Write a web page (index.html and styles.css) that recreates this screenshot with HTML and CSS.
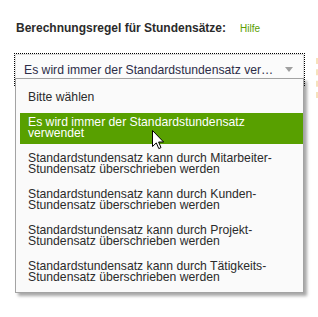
FILE: index.html
```html
<!DOCTYPE html>
<html lang="de">
<head>
  <meta charset="UTF-8">
  <meta name="viewport" content="width=device-width, initial-scale=1.0">
  <title>Stundensätze</title>
  <link rel="stylesheet" href="styles.css">
</head>
<body>
  <div class="field">
    <div class="label-row">
      <span class="label">Berechnungsregel für Stundensätze:</span>
      <a class="help" href="#">Hilfe</a>
    </div>
    <div class="field-row">
      <div class="select-wrap">
        <div class="select">
          <span class="select-text">Es wird immer der Standardstundensatz ver…</span>
          <span class="select-arrow"></span>
        </div>
        <!-- Open dropdown -->
        <div class="dropdown">
          <ul>
            <li>Bitte wählen</li>
            <li class="active">Es wird immer der Standardstundensatz verwendet</li>
            <li>Standardstundensatz kann durch Mitarbeiter-Stundensatz überschrieben werden</li>
            <li>Standardstundensatz kann durch Kunden-Stundensatz überschrieben werden</li>
            <li>Standardstundensatz kann durch Projekt-Stundensatz überschrieben werden</li>
            <li>Standardstundensatz kann durch Tätigkeits-Stundensatz überschrieben werden</li>
          </ul>
          <svg class="cursor" width="13" height="20" viewBox="0 0 13 20">
            <path d="M0.5 0.5 L0.5 16.5 L4.3 12.9 L6.8 18.6 L9 17.6 L6.6 12 L11.6 12 Z" fill="#fff" stroke="#000" stroke-width="1" stroke-linejoin="miter"/>
          </svg>
        </div>
      </div>
      <div class="side-mark"></div>
    </div>
  </div>
</body>
</html>
```

FILE: styles.css
```css
body {
  font-family: 'Liberation Sans', Arial, sans-serif;
  margin: 0;
  background-color: #ffffff;
  color: #2b2b2b;
  height: 317px;
  overflow: hidden;
}
.field {
  padding: 20px 0 0 15px;
}
.label-row {
  display: flex;
  align-items: baseline;
  gap: 14px;
  padding-left: 1px;
  line-height: 16px;
}
.label {
  font-size: 12px;
  font-weight: bold;
  color: #2b2b2b;
}
.help {
  font-size: 10px;
  color: #5a9e00;
  text-decoration: none;
}
.field-row {
  display: flex;
  align-items: flex-start;
  gap: 12px;
  margin-top: 17px;
}
.select-wrap {
  position: relative;
  width: 289px;
}
.select {
  display: flex;
  align-items: center;
  justify-content: space-between;
  height: 29px;
  padding: 0 8px 0 8px;
  border: 1px solid #dddddd;
  outline: 1px dotted #000000;
  background-color: #fbfbfb;
  font-size: 12.2px;
  color: #2d2d48;
}
.select-arrow {
  width: 0;
  height: 0;
  border-left: 4px solid transparent;
  border-right: 4px solid transparent;
  border-top: 5px solid #a0a0a0;
  margin-right: 2px;
}
.dropdown {
  position: absolute;
  top: 24px;
  left: 0;
  width: 287px;
  background-color: #fafafa;
  border: 1px solid #a3a3a3;
  box-shadow: 3px 3px 3px rgba(0, 0, 0, 0.35);
  z-index: 10;
}
.dropdown ul {
  list-style: none;
  margin: 0;
  padding: 9px 0 4px 4px;
  display: flex;
  flex-direction: column;
  gap: 5px;
}
.dropdown li {
  font-size: 12.2px;
  line-height: 11px;
  padding: 4px 28px 5px 8px;
  color: #2b2b2b;
}
.dropdown li.active {
  background-color: #58a000;
  color: #ffffff;
}
.cursor {
  position: absolute;
  left: 136px;
  top: 51px;
}
.side-mark {
  width: 0;
  height: 40px;
  margin-top: 4px;
  border-left: 2px dashed #f6e2bd;
}
```
